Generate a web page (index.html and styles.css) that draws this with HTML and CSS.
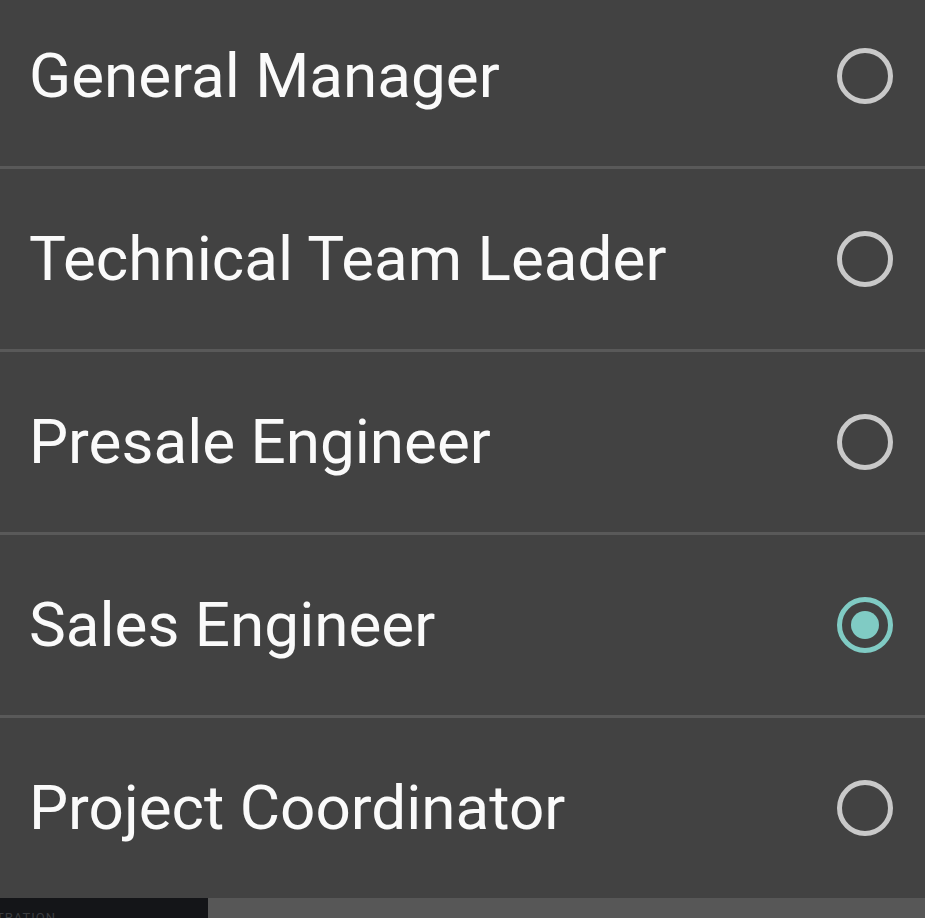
FILE: index.html
```html
<!DOCTYPE html>
<html>
<head>
<meta charset="utf-8">
<link rel="stylesheet" href="styles.css">
</head>
<body>
<div class="screen">
  <ul class="list">
    <li class="item"><span class="label">General Manager</span><span class="radio"></span></li>
    <li class="item"><span class="label">Technical Team Leader</span><span class="radio"></span></li>
    <li class="item"><span class="label">Presale Engineer</span><span class="radio"></span></li>
    <li class="item"><span class="label">Sales Engineer</span><span class="radio checked"></span></li>
    <li class="item"><span class="label">Project Coordinator</span><span class="radio"></span></li>
  </ul>
  <div class="bottom">
    <div class="bottom-left"><span class="ghost">TRATION</span></div>
    <div class="bottom-right"></div>
  </div>
</div>
</body>
</html>
```
FILE: styles.css
```css
html, body {
  margin: 0;
  padding: 0;
  background: #424242;
}
.screen {
  width: 925px;
  height: 918px;
  overflow: hidden;
  display: flex;
  flex-direction: column;
  background: #424242;
}
.list {
  list-style: none;
  margin: -14px 0 0 0;
  padding: 0;
}
.item {
  height: 180px;
  display: flex;
  align-items: center;
  justify-content: space-between;
  padding: 0 32px 0 29px;
  border-bottom: 3px solid #595959;
  box-sizing: content-box;
}
.item:last-child {
  border-bottom: none;
}
.label {
  font-family: Roboto, "Noto Sans", sans-serif;
  font-size: 62px;
  color: #fafafa;
  line-height: 1;
}
.radio {
  width: 56px;
  height: 56px;
  box-sizing: border-box;
  border: 5.5px solid #c9c9c9;
  border-radius: 50%;
  display: flex;
  align-items: center;
  justify-content: center;
}
.radio.checked {
  border-color: #80cbc4;
}
.radio.checked::after {
  content: "";
  width: 28px;
  height: 28px;
  border-radius: 50%;
  background: #80cbc4;
}
.bottom {
  display: flex;
  height: 20px;
}
.bottom-left {
  width: 208px;
  background: #141518;
  overflow: hidden;
}
.ghost {
  display: block;
  font-family: Roboto, sans-serif;
  font-size: 13px;
  line-height: 16px;
  color: #3c3d40;
  padding-top: 12px;
  margin-left: -4px;
  letter-spacing: 1px;
}
.bottom-right {
  flex: 1;
  background: #575757;
}
```
